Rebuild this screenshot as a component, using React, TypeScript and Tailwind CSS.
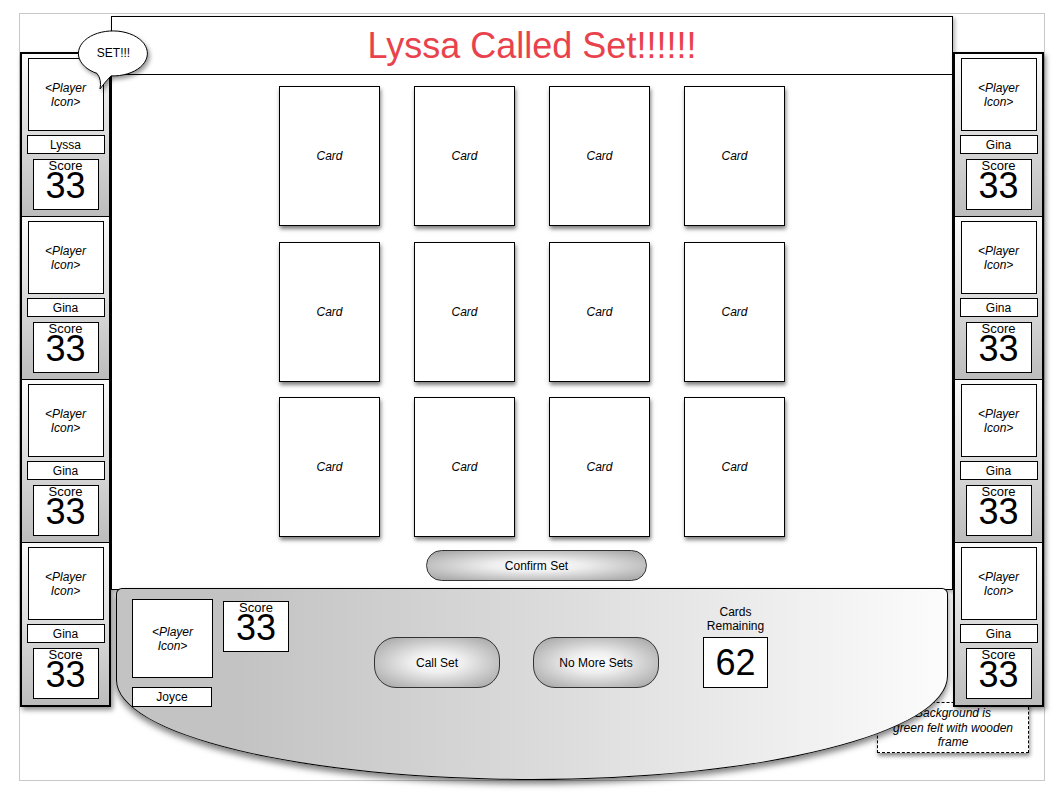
import React from 'react';

const leftPlayers = ['Lyssa', 'Gina', 'Gina', 'Gina'];
const rightPlayers = ['Gina', 'Gina', 'Gina', 'Gina'];

function PlayerIcon({ className }: { className: string }) {
  return (
    <div
      className={`${className} flex flex-col items-center justify-center border border-black bg-white text-[12px] leading-[14px] italic`}
    >
      <span>{'<Player'}</span>
      <span>{'Icon>'}</span>
    </div>
  );
}

function ScoreBox({ score }: { score: number }) {
  return (
    <div className="flex h-[51px] w-[66px] flex-col items-center border border-black bg-white">
      <span className="text-[13px] leading-[11px]">Score</span>
      <span className="text-[36px] leading-[30px]">{score}</span>
    </div>
  );
}

function Slot({ name, last }: { name: string; last?: boolean }) {
  return (
    <div
      className={`flex flex-col items-center bg-linear-to-b from-[#fbfbfb] to-[#bcbcbc] pt-[4px] ${
        last ? 'h-[162px]' : 'h-[163px] border-b border-black'
      }`}
    >
      <PlayerIcon className="h-[73px] w-[76px]" />
      <div className="mt-[4px] flex h-[19px] w-[78px] items-center justify-center border border-black bg-white text-[12px]">
        {name}
      </div>
      <div className="mt-[5px]">
        <ScoreBox score={33} />
      </div>
    </div>
  );
}

function Sidebar({ players }: { players: string[] }) {
  return (
    <div className="relative z-10 mt-[38px] flex w-[91px] shrink-0 flex-col self-start border-2 border-black shadow-[2px_3px_5px_rgba(0,0,0,0.45)]">
      {players.map((p, i) => (
        <Slot key={i} name={p} last={i === players.length - 1} />
      ))}
    </div>
  );
}

function Card() {
  return (
    <div className="flex h-[140px] w-[101px] items-center justify-center border border-black bg-white text-[12px] italic shadow-[1px_3px_4px_rgba(0,0,0,0.5)]">
      Card
    </div>
  );
}

function PillButton({ label, className }: { label: string; className: string }) {
  return (
    <div
      className={`${className} flex items-center justify-center border border-[#333] bg-[radial-gradient(ellipse_at_center,#ffffff_0%,#eeeeee_30%,#9e9e9e_100%)] text-[12px]`}
    >
      {label}
    </div>
  );
}

function SpeechBubble() {
  return (
    <div className="absolute left-[58px] top-[16px] z-20 h-[62px] w-[76px]">
      <svg
        width="76"
        height="62"
        viewBox="0 0 76 62"
        className="drop-shadow-[2px_3px_2px_rgba(0,0,0,0.4)]"
      >
        <path
          d="M33 45.9 A34.5 22.5 0 1 0 19 43.4 Q24 50 22 59 Q27 52 33 45.9 Z"
          fill="#ffffff"
          stroke="#000000"
          strokeWidth="1"
        />
      </svg>
      <span className="absolute left-0 top-[16px] w-[71px] text-center text-[12px] leading-[14px]">SET!!!</span>
    </div>
  );
}

export default function App() {
  return (
    <div className="min-h-[803px] w-[1064px] bg-white pl-[19px] pt-[13px] font-['Liberation_Sans',Arial,Helvetica,sans-serif] text-black">
      <div className="relative flex h-[768px] w-[1026px] border border-[#c9c9c9]">
        <div className="absolute left-[857px] top-[688px] z-0 flex h-[51px] w-[152px] flex-col items-center border border-dashed border-black bg-white pt-[3px] text-[12px] leading-[14.5px] italic shadow-[1px_3px_4px_rgba(0,0,0,0.45)]">
          <span>Background is</span>
          <span>green felt with wooden</span>
          <span>frame</span>
        </div>

        <Sidebar players={leftPlayers} />

        <div className="relative z-10 mt-[2px] flex w-[842px] shrink-0 flex-col">
          <div className="flex h-[575px] flex-col border border-black bg-white shadow-[2px_2px_4px_rgba(0,0,0,0.3)]">
            <div className="flex h-[58px] items-center justify-center border-b border-black text-[36px] text-[#e9424c]">
              Lyssa Called Set!!!!!!
            </div>
            <div className="grid grid-cols-[repeat(4,101px)] justify-center gap-x-[34px] gap-y-[15.5px] pt-[11px]">
              {Array.from({ length: 12 }).map((_, i) => (
                <Card key={i} />
              ))}
            </div>
            <div className="mt-[13px] flex justify-center pl-[9px]">
              <PillButton label="Confirm Set" className="h-[31px] w-[221px] rounded-full" />
            </div>
          </div>

          <div className="relative -mt-[2px] mx-[5px] flex h-[192px] items-start rounded-t-[6px] rounded-bl-[50%_100px] rounded-br-[50%_104px] border border-black bg-linear-to-r from-[#c3c3c3] from-15% to-[#fcfcfc] shadow-[0_4px_6px_rgba(0,0,0,0.5)]">
            <div className="ml-[15px] mt-[10px] flex flex-col">
              <PlayerIcon className="h-[79px] w-[81px]" />
              <div className="mt-[9px] flex h-[20px] w-[80px] items-center justify-center border border-black bg-white text-[12px]">
                Joyce
              </div>
            </div>
            <div className="ml-[10px] mt-[12px]">
              <ScoreBox score={33} />
            </div>
            <PillButton label="Call Set" className="ml-[85px] mt-[48px] h-[51px] w-[126px] rounded-[22px]" />
            <PillButton label="No More Sets" className="ml-[33px] mt-[48px] h-[51px] w-[126px] rounded-[22px]" />
            <div className="ml-[44px] mt-[16px] flex w-[65px] flex-col items-center">
              <span className="text-[12px] leading-[14px]">Cards</span>
              <span className="text-[12px] leading-[14px]">Remaining</span>
              <div className="mt-[4px] flex h-[51px] w-[65px] items-center justify-center border border-black bg-white text-[36px] leading-none">
                62
              </div>
            </div>
          </div>
        </div>

        <Sidebar players={rightPlayers} />

        <SpeechBubble />
      </div>
    </div>
  );
}
